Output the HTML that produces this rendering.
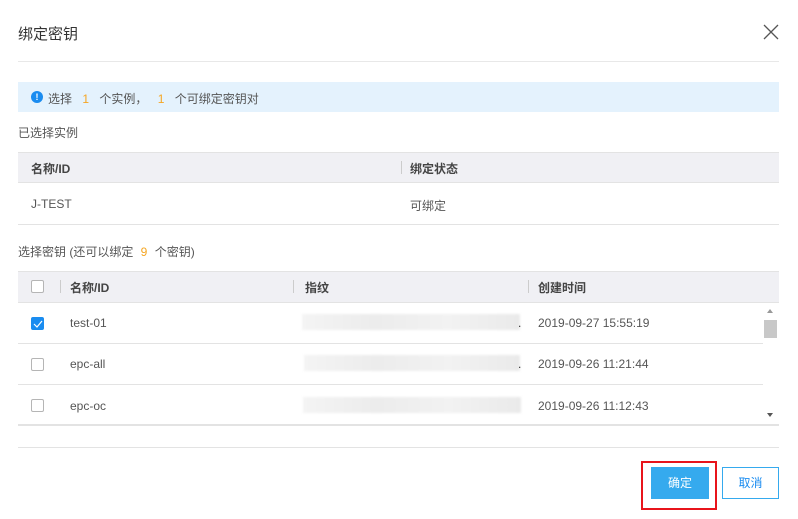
<!DOCTYPE html>
<html><head><meta charset="utf-8"><style>
*{margin:0;padding:0;box-sizing:border-box}
body{width:798px;height:519px;background:#fff;font-family:"Liberation Sans","Noto Sans CJK SC",sans-serif;font-size:12px;color:#333;position:relative;overflow:hidden}
.a{position:absolute}
.line{position:absolute;height:1px;background:#e3e3e3}
.cb{position:absolute;width:13px;height:13px;border:1px solid #b5b5b5;border-radius:2px;background:#fff}
.sep{position:absolute;width:1px;height:13px;background:#ccc}
.blur{position:absolute;height:16px;background:linear-gradient(90deg,#f4f4f4,#ececec,#f2f2f2,#eaeaea);filter:blur(1px)}
</style></head><body>
<div class="a" style="left:18px;top:23px;font-size:15px;color:#333">绑定密钥</div>
<svg class="a" style="left:763px;top:24px" width="16" height="16"><path d="M1 1L15 15M15 1L1 15" stroke="#555" stroke-width="1.3"/></svg>
<div class="line" style="left:18px;top:61px;width:761px;background:#e8e8e8"></div>
<div class="a" style="left:18px;top:82px;width:761px;height:30px;background:#e4f2fd"></div>
<div class="a" style="left:31px;top:91px;width:12px;height:12px;border-radius:50%;background:#1a8cf0;color:#fff;font-size:9px;font-weight:bold;text-align:center;line-height:12px">!</div>
<div class="a" style="left:48px;top:90px;color:#555">选择 <span style="color:#f5a623;margin:0 7px">1</span> 个实例， <span style="color:#f5a623;margin:0 7px">1</span> 个可绑定密钥对</div>
<div class="a" style="left:18px;top:124px;color:#555">已选择实例</div>
<div class="a" style="left:18px;top:152px;width:761px;height:31px;background:#f0f0f4;border-top:1px solid #e3e3e3;border-bottom:1px solid #e3e3e3"></div>
<div class="a" style="left:31px;top:160px;font-weight:bold;color:#444">名称/ID</div>
<div class="sep" style="left:401px;top:161px"></div>
<div class="a" style="left:410px;top:160px;font-weight:bold;color:#444">绑定状态</div>
<div class="a" style="left:31px;top:197px;color:#555">J-TEST</div>
<div class="a" style="left:410px;top:197px;color:#555">可绑定</div>
<div class="line" style="left:18px;top:224px;width:761px"></div>
<div class="a" style="left:18px;top:243px;color:#555">选择密钥 (还可以绑定 <span style="color:#f5a623;margin:0 4px">9</span> 个密钥)</div>
<div class="a" style="left:18px;top:271px;width:761px;height:32px;background:#f0f0f4;border-top:1px solid #e3e3e3;border-bottom:1px solid #e3e3e3"></div>
<div class="cb" style="left:31px;top:280px"></div>
<div class="sep" style="left:60px;top:280px"></div>
<div class="a" style="left:70px;top:279px;font-weight:bold;color:#444">名称/ID</div>
<div class="sep" style="left:293px;top:280px"></div>
<div class="a" style="left:305px;top:279px;font-weight:bold;color:#444">指纹</div>
<div class="sep" style="left:528px;top:280px"></div>
<div class="a" style="left:538px;top:279px;font-weight:bold;color:#444">创建时间</div>

<div class="cb" style="left:31px;top:317px;background:#1a8cf0;border-color:#1a8cf0"></div>
<svg class="a" style="left:33px;top:319px" width="10" height="10"><path d="M1 5L4 8L9 2" stroke="#fff" stroke-width="1.2" fill="none"/></svg>
<div class="a" style="left:70px;top:316px;color:#555">test-01</div>
<div class="blur" style="left:302px;top:314px;width:218px"></div>
<div class="a" style="left:518px;top:316px">.</div>
<div class="a" style="left:538px;top:316px;color:#555">2019-09-27 15:55:19</div>
<div class="line" style="left:18px;top:343px;width:745px"></div>

<div class="cb" style="left:31px;top:358px"></div>
<div class="a" style="left:70px;top:357px;color:#555">epc-all</div>
<div class="blur" style="left:304px;top:355px;width:216px"></div>
<div class="a" style="left:518px;top:357px">.</div>
<div class="a" style="left:538px;top:357px;color:#555">2019-09-26 11:21:44</div>
<div class="line" style="left:18px;top:384px;width:745px"></div>

<div class="cb" style="left:31px;top:399px"></div>
<div class="a" style="left:70px;top:399px;color:#555">epc-oc</div>
<div class="blur" style="left:303px;top:397px;width:218px"></div>
<div class="a" style="left:538px;top:399px;color:#555">2019-09-26 11:12:43</div>
<div class="a" style="left:18px;top:424px;width:761px;height:2px;background:#e3e3e3"></div>

<div class="a" style="left:763px;top:303px;width:16px;height:121px;background:#fff"></div>
<svg class="a" style="left:766px;top:308px" width="8" height="6"><path d="M1 5L4 1L7 5Z" fill="#999"/></svg>
<div class="a" style="left:764px;top:320px;width:13px;height:18px;background:#c8c8c8"></div>
<svg class="a" style="left:766px;top:412px" width="8" height="6"><path d="M1 1L4 5L7 1Z" fill="#555"/></svg>

<div class="line" style="left:18px;top:447px;width:761px"></div>
<div class="a" style="left:641px;top:461px;width:76px;height:49px;border:2px solid #e8141b"></div>
<div class="a" style="left:651px;top:467px;width:58px;height:32px;background:#35aaee;color:#fff;text-align:center;line-height:32px">确定</div>
<div class="a" style="left:722px;top:467px;width:57px;height:32px;border:1px solid #35aaee;color:#1a8cf0;text-align:center;line-height:30px">取消</div>
</body></html>
